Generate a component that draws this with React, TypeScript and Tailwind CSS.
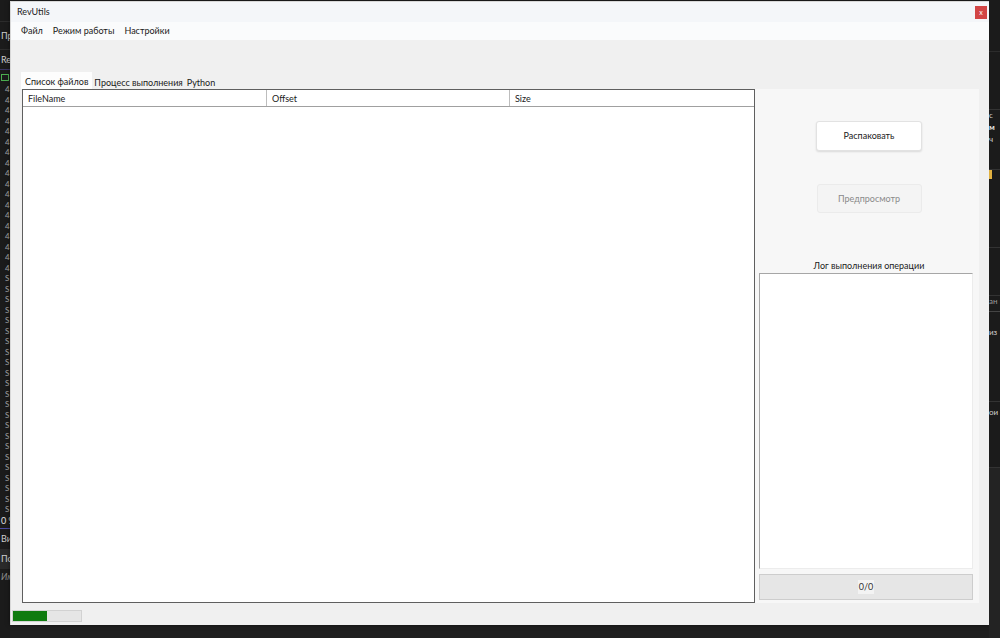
import React from 'react';

const leftRows = [
  '4', '4', '4', '4', '4', '4', '4', '4', '4', '4', '4', '4', '4', '4', '4', '4', '4', '4',
  'S', 'S', 'S', 'S', 'S', 'S', 'S', 'S', 'S', 'S', 'S', 'S', 'S', 'S', 'S', 'S', 'S', 'S', 'S', 'S', 'S', 'S', 'S',
];

const DesktopLeft = () => (
  <div className="w-[10px] shrink-0 h-full flex flex-col overflow-hidden whitespace-nowrap text-[9px] leading-[10px] text-[#cfcfcf] bg-[#1b1b1b]">
    <div className="h-[22px] shrink-0 border-b border-[#2c2c2c]" />
    <div className="h-[28px] shrink-0 flex items-center pl-[1px] border-b border-[#2c2c2c]">Пр</div>
    <div className="h-[20px] shrink-0 flex items-center pl-[1px] border-b border-[#3a3560]">Rev</div>
    <div className="h-[14px] shrink-0 flex items-center pl-[1px]">
      <span className="w-[8px] h-[7px] border border-[#4caf50]" />
    </div>
    {leftRows.map((c, i) => (
      <div key={i} className="h-[10.5px] shrink-0 leading-[10.5px] pl-[5px] text-[8px] text-[#a8a8a8]">{c}</div>
    ))}
    <div className="h-[14px] shrink-0 pl-[1px] flex items-center text-[#e0e0e0] border-b border-[#4a4aa0]">0 %</div>
    <div className="h-[20px] shrink-0 pl-[1px] flex items-center">Вид</div>
    <div className="h-[20px] shrink-0 pl-[1px] flex items-center bg-[#2a2a2a]">По</div>
    <div className="h-[16px] shrink-0 pl-[1px] flex items-center italic text-[#8a8a8a]">Им</div>
  </div>
);

const DesktopRight = () => (
  <div className="w-[11px] shrink-0 h-full flex flex-col overflow-hidden whitespace-nowrap text-[8px] leading-[10px] text-[#d0d0d0] bg-[#1b1b1b]">
    <div className="h-[52px] shrink-0 border-b border-[#2c2c2c]" />
    <div className="h-[58px] shrink-0 border-b border-[#333]" />
    <div className="h-[12px] shrink-0">с</div>
    <div className="h-[12px] shrink-0 font-bold text-[#e8e8e8]">м</div>
    <div className="h-[12px] shrink-0">ч</div>
    <div className="h-[24px] shrink-0 border-b border-[#333]" />
    <div className="h-[18px] shrink-0"><span className="block w-[3px] h-[9px] bg-[#e0b040]" /></div>
    <div className="h-[60px] shrink-0 border-b border-[#333]" />
    <div className="h-[48px] shrink-0 border-b border-[#333]" />
    <div className="h-[16px] shrink-0 text-[#9a9a9a] border-b border-[#444]">ан</div>
    <div className="h-[40px] shrink-0 flex items-center">из</div>
    <div className="h-[50px] shrink-0 border-b border-[#333]" />
    <div className="h-[20px] shrink-0 flex items-center">ои</div>
    <div className="h-[46px] shrink-0 border-b border-[#333]" />
    <div className="flex-1 bg-[#232323]" />
  </div>
);

const TitleBar = () => (
  <div className="h-[20px] shrink-0 flex items-center justify-between pl-[6px] pr-[2px] bg-[#f4f6f9]">
    <span className="text-[9px] text-[#1a1a1a]">RevUtils</span>
    <div className="w-[12px] h-[13px] bg-[#d24545] flex items-center justify-center text-[7px] text-white leading-none">x</div>
  </div>
);

const MenuBar = () => (
  <div className="h-[18px] shrink-0 flex items-center gap-[10px] pl-[10px] bg-[#fafbfc] text-[9px] text-[#1a1a1a]">
    <span>Файл</span>
    <span>Режим работы</span>
    <span>Настройки</span>
  </div>
);

const Tabs = () => (
  <div className="h-[17px] flex items-end pl-[9px] text-[9px] text-[#1a1a1a]">
    <div className="h-[17px] px-[4px] pt-[2px] bg-[#fdfdfd] flex items-center">Список файлов</div>
    <div className="h-[15px] px-[2px] pt-[2px] flex items-center">Процесс выполнения</div>
    <div className="h-[15px] px-[2px] pt-[2px] flex items-center">Python</div>
  </div>
);

const FileTable = () => (
  <div className="w-[733px] shrink-0 h-full bg-white border border-[#5f5f5f] flex flex-col">
    <div className="h-[17px] flex border-b border-[#a0a0a0] text-[9px] text-[#1a1a1a]">
      <div className="w-[244px] px-[5px] pt-[1px] flex items-center border-r border-[#bdbdbd]">FileName</div>
      <div className="w-[243px] px-[5px] pt-[1px] flex items-center border-r border-[#bdbdbd]">Offset</div>
      <div className="flex-1 px-[5px] pt-[1px] flex items-center">Size</div>
    </div>
    <div className="flex-1" />
  </div>
);

const SidePanel = () => (
  <div className="w-[224px] shrink-0 h-full bg-[#f7f7f7] flex flex-col pl-[4px] text-[9px]">
    <button className="self-center mt-[32px] w-[106px] h-[30px] bg-white rounded-[3px] border border-[#e2e2e2] shadow-[0_1px_2px_rgba(0,0,0,0.12)] text-[#1a1a1a]">
      Распаковать
    </button>
    <button className="self-center mt-[33px] w-[105px] h-[29px] bg-[#f4f4f4] rounded-[3px] border border-[#ebebeb] text-[#8a8a8a]">
      Предпросмотр
    </button>
    <div className="self-center mt-[48px] h-[10px] flex items-center text-[#1a1a1a]">Лог выполнения операции</div>
    <div className="mt-[2px] w-[214px] h-[296px] bg-white border-t border-l border-[#a6a6a6] border-r border-b border-r-[#ececec] border-b-[#ececec]" />
    <div className="mt-[5px] w-[214px] h-[26px] bg-[#e6e6e6] border border-[#cdcdcd] flex items-center justify-center">
      <span className="bg-[#f3f3f3] px-[1px] text-[#333]">0/0</span>
    </div>
  </div>
);

const StatusBar = () => (
  <div className="h-[21px] shrink-0 flex items-start pt-[7px]">
    <div className="w-[70px] h-[12px] bg-[#e6e6e6] border border-[#d2d2d2] flex">
      <div className="w-[34px] h-full bg-[#0f7b0f]" />
    </div>
  </div>
);

export default function App() {
  return (
    <div className="w-[1000px] h-[638px] flex bg-[#1f1f1f] overflow-hidden" style={{ fontFamily: 'Lato, "Noto Sans", sans-serif' }}>
      <DesktopLeft />
      <div className="w-[979px] h-[624px] mt-[1px] shrink-0 flex flex-col bg-[#f0f0f0] border-l border-t border-[#d8d8d8] shadow-[0_0_4px_rgba(0,0,0,0.5)]">
        <TitleBar />
        <MenuBar />
        <div className="flex-1 flex flex-col px-[1px]">
          <div className="h-[32px]" />
          <Tabs />
          <div className="h-[514px] flex pl-[10px]">
            <FileTable />
            <SidePanel />
          </div>
          <StatusBar />
        </div>
      </div>
      <DesktopRight />
    </div>
  );
}
